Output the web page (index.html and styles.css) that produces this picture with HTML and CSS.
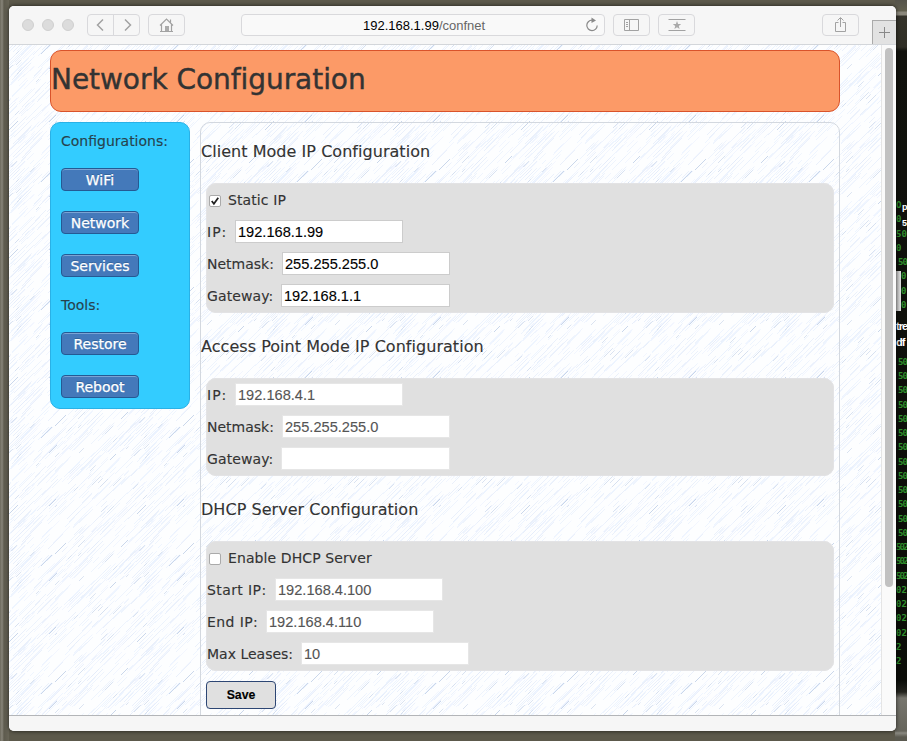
FILE: index.html
```html
<!DOCTYPE html>
<html lang="en">
<head>
<meta charset="utf-8">
<title>Network Configuration</title>
<link rel="stylesheet" href="styles.css">
</head>
<body>
<div class="desktop">
  <div class="terminal" id="terminal"></div>
  <span class="thumb"></span>
  <div class="desk-label label-top">p<br>5</div>
  <div class="desk-label label-mid">tre<br>df</div>

  <div class="window">
    <header class="toolbar">
      <div class="lights"><i></i><i></i><i></i></div>
      <div class="nav">
        <span class="tool"><svg width="26" height="20" viewBox="0 0 26 20"><path d="M15 4.500 9.500 10 15 15.500"/></svg></span>
        <span class="tool"><svg width="26" height="20" viewBox="0 0 26 20"><path d="M11 4.500 16.500 10 11 15.500"/></svg></span>
      </div>
      <span class="tool home"><svg width="20" height="20" viewBox="0 0 20 20"><path class="roof" d="M4 10.500 10.500 4 17 10.500M5.500 9.500V16.500M15.500 9.500V16.500M4 16.500H17M14.500 7.500V4.500"/><path class="solid" d="M9 11h4v5H9z"/></svg></span>
      <div class="address"><b>192.168.1.99</b><span>/confnet</span>
        <svg class="reload" width="14" height="16" viewBox="0 0 14 16"><path d="M7 3.200A5.200 5.200 0 1 0 12.200 8.500"/><path class="tip" d="M6.500.5 11 3.400 6.500 6z"/></svg>
      </div>
      <span class="tool side"><svg width="20" height="20" viewBox="0 0 20 20"><path class="thin" d="M2.500 4.500H16.500V15.500H2.500zM7.500 4.500V15.500M4 7.500H6M4 9.500H6M4 11.500H6"/></svg></span>
      <span class="tool star"><svg width="20" height="20" viewBox="0 0 20 20"><path class="thin" d="M1.500 4.500H18.500M1.500 15.500H18.500"/><path class="solid" d="m10 6 1.100 2.900 3.100.1-2.400 1.900.8 3L10 12.200 7.400 13.900l.8-3L5.800 9l3.100-.1z"/></svg></span>
      <span class="tool share"><svg width="20" height="20" viewBox="0 0 20 20"><path class="thin" d="M7.500 7.500H4.500V16.500H14.500V7.500H11.500M9.500 12V3M6.500 5.500 9.500 2.500 12.500 5.500"/></svg></span>
      <span class="newtab"><svg width="23" height="24" viewBox="0 0 23 24"><path d="M6 11.500H17M11.500 6V17"/></svg></span>
    </header>

    <div class="viewport">
      <svg class="texture" width="872" height="670">
        <defs><pattern id="strokes" x="0" y="-17" width="128" height="128" patternUnits="userSpaceOnUse"></pattern></defs>
        <rect width="872" height="670" fill="url(#strokes)"/>
      </svg>
      <main class="page">
        <h1>Network Configuration</h1>
        <div class="columns">
          <nav class="menu">
            <p>Configurations:</p>
            <a>WiFi</a><a>Network</a><a>Services</a>
            <p>Tools:</p>
            <a>Restore</a><a>Reboot</a>
          </nav>
          <form class="content">
            <h2>Client Mode IP Configuration</h2>
            <fieldset>
              <div class="row check"><span class="box"><svg width="12" height="12" viewBox="0 0 11 11"><path d="M2.500 5.500 4.500 8 8.500 2.500"/></svg></span>Static IP</div>
              <div class="row"><label class="ip">IP:</label><input value="192.168.1.99"></div>
              <div class="row"><label class="mask">Netmask:</label><input value="255.255.255.0"></div>
              <div class="row"><label class="gate">Gateway:</label><input class="wide" value="192.168.1.1"></div>
            </fieldset>
            <h2>Access Point Mode IP Configuration</h2>
            <fieldset class="short off">
              <div class="row"><label class="ip">IP:</label><input value="192.168.4.1"></div>
              <div class="row"><label class="mask">Netmask:</label><input value="255.255.255.0"></div>
              <div class="row"><label class="gate">Gateway:</label><input class="wide" value=""></div>
            </fieldset>
            <h2>DHCP Server Configuration</h2>
            <fieldset class="last off">
              <div class="row check"><span class="box"></span>Enable DHCP Server</div>
              <div class="row"><label class="start">Start IP:</label><input value="192.168.4.100"></div>
              <div class="row"><label class="end">End IP:</label><input value="192.168.4.110"></div>
              <div class="row"><label class="max">Max Leases:</label><input value="10"></div>
            </fieldset>
            <button type="button">Save</button>
          </form>
        </div>
      </main>
      <div class="scroll"><i></i></div>
    </div>
    <footer class="status"></footer>
  </div>
</div>
<script src="script.js"></script>
</body>
</html>
```
FILE: styles.css
```css
* { box-sizing: border-box; }
body { margin: 0; font-family: Verdana, "DejaVu Sans", sans-serif; font-size: 14px; color: #333; }
.desktop {
  position: relative; width: 907px; height: 741px; overflow: hidden; padding: 6px 0 0 9px;
  background:
    linear-gradient(#55534a, #62604f 11px, #8b887c 12px, #8b887c 15px, #34332b 16px, #302f26 47px, #11120d 51px, #0b0d08 680px, #24241e 692px, #77766e 698px, #66655c 731px, #8a8981 733px, #5b5a50 737px) right 0 / 12px 100% no-repeat,
    linear-gradient(90deg, #6c695c, #88857a 2px, #5e5b4e 4px, #686557 9px) left 0 / 9px 100% no-repeat,
    #5c594b;
}
.terminal { position: absolute; left: 896px; top: 198px; width: 11px; font: bold 9px/14.25px "DejaVu Sans Mono", monospace; color: #2f8f2c; }
.terminal span { display: block; height: 14.25px; white-space: pre; }
.terminal .shift { padding-left: 2px; letter-spacing: -1px; }
.terminal .beside { padding-left: 5px; }
.terminal .tight { letter-spacing: -1.8px; }
.thumb { position: absolute; left: 896px; top: 271px; width: 5px; height: 40px; background: linear-gradient(90deg, #bbb, #e0e0e0); }
.desk-label { position: absolute; color: #fff; font: bold 11px/16px "Liberation Sans", sans-serif; }
.label-top { left: 902px; top: 199px; font-size: 9px; }
.label-mid { left: 896px; top: 318px; letter-spacing: -1px; }

.window { position: relative; width: 887px; height: 725px; border-radius: 5px; overflow: hidden; background: #f6f6f6; display: flex; flex-direction: column; box-shadow: 0 0 4px rgba(0,0,0,.7); }
.toolbar { flex: none; height: 39px; border-bottom: 1px solid #d3d6da; background: #f6f6f6; display: flex; align-items: flex-start; padding: 8px 0 0 13px; }
.lights { display: flex; gap: 8px; padding-top: 5px; width: 65px; }
.lights i { width: 12px; height: 12px; border-radius: 50%; background: #dcdcdc; border: 1px solid #d0d0d0; }
.tool { height: 22px; width: 37px; border: 1px solid #d9d9dc; border-radius: 4px; display: flex; justify-content: center; align-items: center; }
.tool svg { fill: none; stroke: #a2a2a2; stroke-width: 1.5; flex: none; }
.tool .thin { stroke-width: 1; }
.tool .roof { stroke-width: 1.2; }
.tool .solid { fill: #aaa; stroke: none; }
.nav { display: flex; width: 53px; }
.nav .tool { width: 27px; }
.nav .tool:first-child { border-radius: 4px 0 0 4px; }
.nav .tool:last-child { border-radius: 0 4px 4px 0; margin-left: -1px; }
.home { margin-left: 8px; }
.home svg { margin-right: 1px; }
.address { position: relative; width: 364px; height: 22px; margin-left: 56px; border: 1px solid #d9d9dc; border-radius: 4px; background: #f9f9f9; font: 13px/22px "Liberation Sans", Arial, sans-serif; color: #666; padding-left: 121px; }
.address b { font-weight: normal; color: #000; }
.reload { position: absolute; right: 5px; top: 2px; fill: none; stroke: #8a8a8a; stroke-width: 1.2; }
.tip { fill: #8a8a8a; stroke: none; }
.side { margin-left: 8px; }
.star { margin-left: 8px; }
.share { margin-left: 127px; }
.newtab { width: 24px; height: 24px; margin: 6px 0 0 13px; background: #e2e2e2; border: solid #aaa; border-width: 1px 0 0 1px; }
.newtab svg { display: block; fill: none; stroke: #888; }

.viewport { position: relative; flex: none; height: 670px; background: #fdfeff; overflow: hidden; display: flex; justify-content: space-between; }
.texture { position: absolute; left: 0; top: 0; }
.page { position: relative; width: 790px; margin: 5px 0 0 41px; -webkit-text-stroke: .12px; }
h1 { margin: 0; height: 62px; border: 1px solid #d9532b; border-radius: 11px; background: #fc9a67; font-size: 28px; font-weight: normal; line-height: 57px; letter-spacing: -.05px; -webkit-text-stroke: .4px; }
.columns { display: flex; align-items: flex-start; gap: 10px; margin-top: 10px; }
.menu { width: 140px; height: 287px; border: 1px solid #2ab1e6; border-radius: 10px; background: #3cf; padding: 9px 10px 0; color: #27424d; }
.menu p { margin: 0; height: 19px; line-height: 19px; margin-bottom: 17px; }
.menu a { display: block; width: 78px; height: 23px; margin-bottom: 20px; border: 1px solid #245a94; border-radius: 4px; background: #4479ba; color: #fff; text-align: center; line-height: 22px; text-shadow: 0 -1px 0 #35659c; box-shadow: inset 0 1px 0 #7ca4d4; -webkit-text-stroke: .25px; }
.menu a + p { margin-top: -1px; }
.content { width: 640px; height: 700px; border: 1px solid #d3d8df; border-radius: 10px; }
h2 { margin: 0; font-size: 16px; font-weight: normal; line-height: 20px; height: 20px; letter-spacing: .04px; }
.content h2:first-child { margin-top: 19px; }
fieldset { width: 628px; margin: 21px 0 24px 5px; border: 1px solid #e3e3e5; border-radius: 10px; background: #e0e0e0; padding: 0; min-width: 0; height: 130px; }
.short { height: 98px; }
.last { margin-bottom: 10px; }
.row { height: 32px; display: flex; align-items: center; }
.check { letter-spacing: .1px; }
.row label { flex: none; line-height: 30px; white-space: nowrap; }
.ip { width: 28px; letter-spacing: 1px; } .mask { width: 75px; } .gate { width: 74px; letter-spacing: .1px; }
.start { width: 68px; letter-spacing: .4px; } .end { width: 59px; letter-spacing: .4px; } .max { width: 94px; }
.row input { width: 168px; height: 23px; margin: 0 0 1px; border: 1px solid #ccc; border-radius: 0; background: #fff; padding: 1px 0 0 2px; font: 14.6px "Liberation Sans", Arial, sans-serif; color: #000; }
.row input.wide { width: 169px; }
.off input { border-color: #e6e6e6; color: #555; }
.box { width: 12px; height: 12px; margin: 2px 7px 0 2px; border: 1px solid #aaa; border-radius: 2px; background: #fff; display: flex; }
.box svg { margin: -1px 0 0 -1px; flex: none; fill: none; stroke: #222; stroke-width: 1.6; }
button { display: block; width: 70px; height: 28px; margin-left: 5px; border: 1px solid #2d4673; border-radius: 4px; background: #e0e0e0; color: #000; font: bold 12.3px "Liberation Sans", Arial, sans-serif; padding: 0; }
.scroll { position: relative; width: 15px; background: #fafafa; border-left: 1px solid #e5e5e5; padding: 3px 0 0 3px; }
.scroll i { display: block; width: 8px; height: 539px; border-radius: 4px; background: #c1c1c1; }
.status { flex: 1; border-top: 1px solid #b3b5b8; background: #f6f6f6; }
```
FILE: script.js
```js
// Paper texture: a repeatable tile of fine diagonal pencil strokes.
let seed = 41;
const rnd = () => (seed = (seed * 16807) % 2147483647) / 2147483647;
const colors = ['#eaf1fd', '#eff4ff', '#e5ecfa', '#eaf2ff'];
let out = '';
const stroke = (x, y, len, color) => {
  for (const dx of [-128, 0, 128]) {
    for (const dy of [-128, 0, 128]) {
      out += `<path d="M${x + dx} ${y + dy}l${len} ${-len}" stroke="${color}" stroke-width=".8"/>`;
    }
  }
};
for (let i = 0; i < 330; i++) {
  stroke(Math.round(rnd() * 128), Math.round(rnd() * 128), 4 + rnd() * 16, colors[i % 4]);
}
for (let i = 0; i < 26; i++) {
  stroke(Math.round(rnd() * 128), Math.round(rnd() * 128), 2 + rnd() * 7, '#d0dcee');
}
for (const [x, y, l] of [[32, 26, 11], [46, 14, 11], [40, 41, 8], [101, 48, 6], [40, 94, 7], [0, 102, 9], [112, 7, 7]]) {
  stroke(x, y, l, '#bccde6');
}
document.getElementById('strokes').innerHTML = out;

// Terminal column at the right edge; the thumbnail and desktop labels cover part of it.
const lines = ['O', '0', '50', '0', '50', '0', '0', '0', '', '', ''];
while (lines.length < 24) lines.push('50');
lines.push('502', '502', '502', '02', '02', '02', '02', '2', '2');
const kind = (t, i) => {
  if (t.length === 3) return 'tight';
  if (i > 4 && t === '0') return 'beside';
  return t === '50' && i > 3 ? 'shift' : '';
};
document.getElementById('terminal').innerHTML =
  lines.map((t, i) => `<span class="${kind(t, i)}">${t}</span>`).join('');
```
